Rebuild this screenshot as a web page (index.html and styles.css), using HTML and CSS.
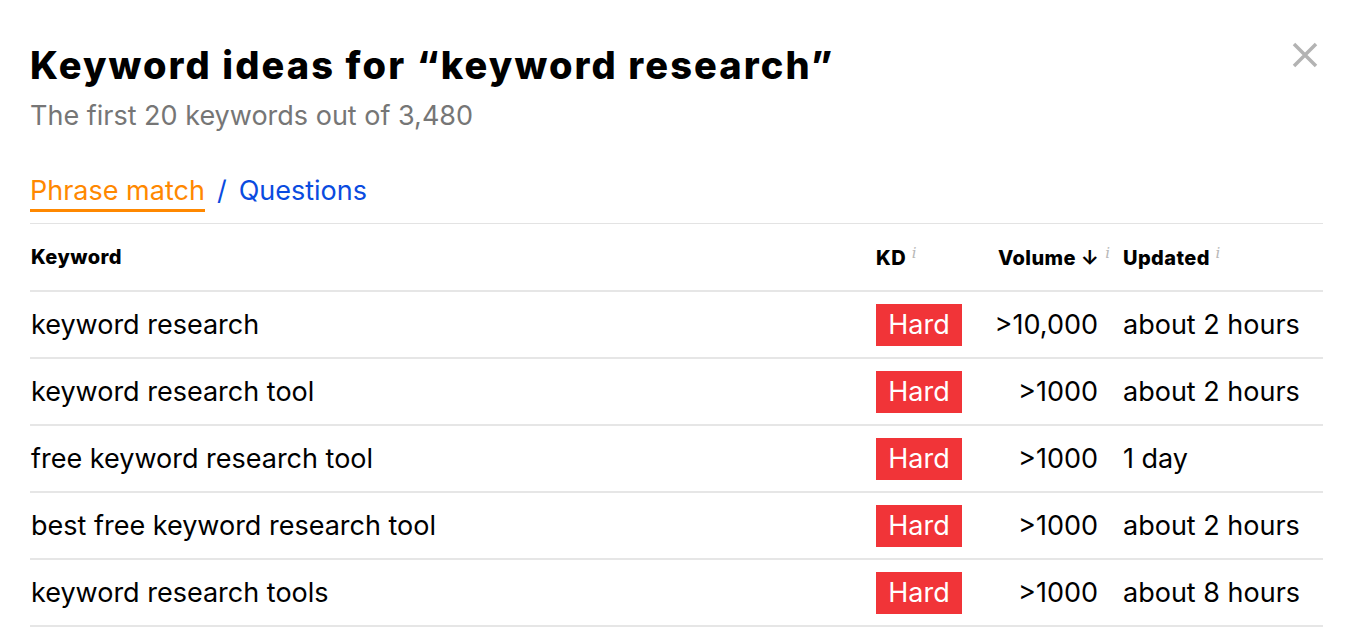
FILE: index.html
```html
<!DOCTYPE html>
<html>
<head>
<meta charset="utf-8">
<link rel="stylesheet" href="styles.css">
</head>
<body>
<div class="panel">
  <div class="head">
    <div class="titles">
      <h1 class="title">Keyword ideas for “keyword research”</h1>
      <p class="subtitle">The first 20 keywords out of 3,480</p>
    </div>
    <button class="close" aria-label="Close">
      <svg width="28" height="28" viewBox="0 0 28 28"><path d="M3 3L25 25M25 3L3 25" stroke="#b3b3b3" stroke-width="3.5" fill="none"/></svg>
    </button>
  </div>
  <div class="tabs">
    <span class="tab active">Phrase match</span>
    <span class="sep">/</span>
    <span class="tab link">Questions</span>
  </div>
  <table class="kw">
    <thead>
      <tr>
        <th class="c-kw">Keyword</th>
        <th class="c-kd">KD <i class="info">i</i></th>
        <th class="c-vol">Volume <span class="arrow">↓</span><i class="info over">i</i></th>
        <th class="c-upd">Updated <i class="info">i</i></th>
      </tr>
    </thead>
    <tbody>
      <tr><td class="c-kw">keyword research</td><td class="c-kd"><span class="badge">Hard</span></td><td class="c-vol">&gt;10,000</td><td class="c-upd">about 2 hours</td></tr>
      <tr><td class="c-kw">keyword research tool</td><td class="c-kd"><span class="badge">Hard</span></td><td class="c-vol">&gt;1000</td><td class="c-upd">about 2 hours</td></tr>
      <tr><td class="c-kw">free keyword research tool</td><td class="c-kd"><span class="badge">Hard</span></td><td class="c-vol">&gt;1000</td><td class="c-upd">1 day</td></tr>
      <tr><td class="c-kw">best free keyword research tool</td><td class="c-kd"><span class="badge">Hard</span></td><td class="c-vol">&gt;1000</td><td class="c-upd">about 2 hours</td></tr>
      <tr><td class="c-kw">keyword research tools</td><td class="c-kd"><span class="badge">Hard</span></td><td class="c-vol">&gt;1000</td><td class="c-upd">about 8 hours</td></tr>
    </tbody>
  </table>
</div>
</body>
</html>
```

FILE: styles.css
```css
html, body {
  margin: 0;
  padding: 0;
  background: #fff;
}
body {
  font-family: Inter, "Noto Sans", sans-serif;
  color: #000;
}
.panel {
  padding: 37px 48px 0 30px;
}
.head {
  display: flex;
  justify-content: space-between;
  align-items: flex-start;
}
.title {
  margin: 0;
  font-size: 38px;
  font-weight: 800;
  line-height: 56px;
  letter-spacing: 2.1px;
}
.subtitle {
  margin: 6px 0 0;
  font-size: 27px;
  line-height: 34px;
  color: #767676;
}
.close {
  background: none;
  border: 0;
  padding: 0;
  margin: 4px 4px 0 0;
  cursor: pointer;
}
.tabs {
  margin-top: 40px;
  display: flex;
  align-items: flex-end;
  gap: 12px;
  font-size: 27px;
  border-bottom: 1px solid #e3e3e3;
  padding-bottom: 11px;
}
.tab.active {
  color: #ff8800;
  border-bottom: 3px solid #ff8800;
  line-height: 36px;
}
.tab.link, .sep {
  color: #0a4be0;
  line-height: 36px;
  padding-bottom: 3px;
}
.kw {
  width: 100%;
  border-collapse: collapse;
}
.kw th {
  font-size: 20px;
  font-weight: 800;
  letter-spacing: 0.4px;
  text-align: left;
  height: 66px;
  border-bottom: 2px solid #e6e6e6;
  padding: 0;
  white-space: nowrap;
}
.kw td {
  font-size: 27px;
  height: 65px;
  border-bottom: 2px solid #e6e6e6;
  padding: 0;
  white-space: nowrap;
}
.kw .c-kw { padding-left: 1px; }
.kw th.c-kd, .kw td.c-kd { width: 86px; padding-left: 0; }
.kw th.c-vol, .kw td.c-vol { text-align: right; width: 136px; padding-right: 0; }
.kw th.c-upd, .kw td.c-upd { width: 200px; padding-left: 25px; }
.info {
  font-family: "DejaVu Serif", serif;
  font-style: italic;
  font-weight: 400;
  font-size: 15px;
  letter-spacing: 0;
  color: #b8b8b8;
  vertical-align: 7px;
  margin-left: 1px;
}
.info.over {
  margin-left: 6px;
  margin-right: -12px;
}
.arrow {
  font-weight: 700;
  font-size: 20px;
}
.badge {
  display: inline-block;
  background: #f13438;
  color: #fff;
  width: 86px;
  height: 42px;
  line-height: 42px;
  text-align: center;
  font-size: 27px;
}
```
